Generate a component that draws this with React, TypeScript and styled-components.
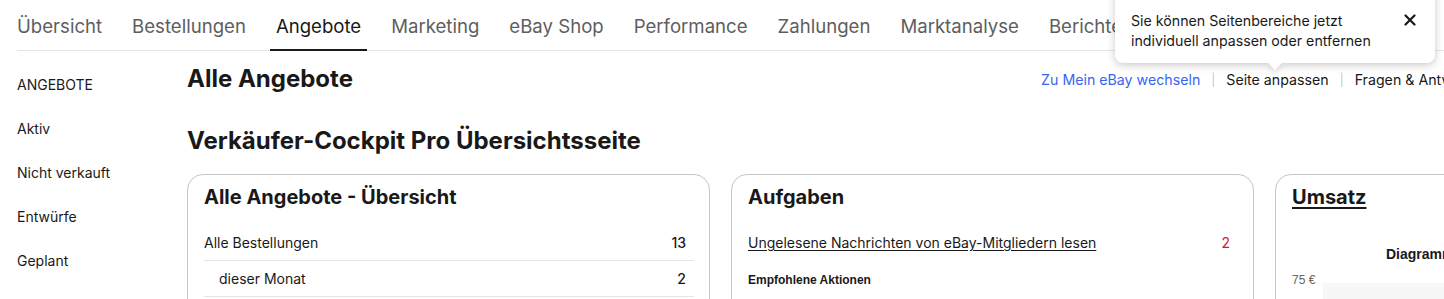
import React from 'react';
import styled, { createGlobalStyle } from 'styled-components';

const GlobalStyle = createGlobalStyle`
  html, body {
    margin: 0;
    padding: 0;
    background: #ffffff;
    overflow: hidden;
  }
  body {
    font-family: Inter, "Liberation Sans", Arial, sans-serif;
    color: #191919;
  }
`;

const tabs = ['Übersicht', 'Bestellungen', 'Angebote', 'Marketing', 'eBay Shop', 'Performance', 'Zahlungen', 'Marktanalyse', 'Berichte'];
const sideItems = ['ANGEBOTE', 'Aktiv', 'Nicht verkauft', 'Entwürfe', 'Geplant', 'Beendet'];

const App: React.FC = () => {
  return (
    <Page>
      <GlobalStyle />
      <TabBar>
        {tabs.map((t) => (
          <Tab key={t} $active={t === 'Angebote'}>{t}</Tab>
        ))}
      </TabBar>

      <Body>
        <Sidebar>
          {sideItems.map((s) => (
            <SideItem key={s}>{s}</SideItem>
          ))}
        </Sidebar>

        <Main>
          <HeaderRow>
            <PageTitle>Alle Angebote</PageTitle>
            <LinkBar>
              <BlueLink>Zu Mein eBay wechseln</BlueLink>
              <Sep>|</Sep>
              <PlainLink>Seite anpassen</PlainLink>
              <Sep>|</Sep>
              <PlainLink>Fragen &amp; Antworten</PlainLink>
            </LinkBar>
          </HeaderRow>

          <SectionTitle>Verkäufer-Cockpit Pro Übersichtsseite</SectionTitle>

          <Cards>
            <Card>
              <CardTitle>Alle Angebote - Übersicht</CardTitle>
              <Row>
                <RowLabel>Alle Bestellungen</RowLabel>
                <RowValue>13</RowValue>
              </Row>
              <Row>
                <RowLabel $indent>dieser Monat</RowLabel>
                <RowValue>2</RowValue>
              </Row>
            </Card>

            <Card>
              <CardTitle>Aufgaben</CardTitle>
              <TaskRow>
                <TaskLink>Ungelesene Nachrichten von eBay-Mitgliedern lesen</TaskLink>
                <TaskCount>2</TaskCount>
              </TaskRow>
              <SubHeading>Empfohlene Aktionen</SubHeading>
            </Card>

            <Card>
              <CardTitle $link>Umsatz</CardTitle>
              <ChartTitle>Diagramm über den Umsatz der letzten 31 Tage</ChartTitle>
              <Chart>
                <AxisLabel>75 €</AxisLabel>
                <Plot />
              </Chart>
            </Card>
          </Cards>
        </Main>
      </Body>

      <Tooltip>
        <TooltipText>
          Sie können Seitenbereiche jetzt
          <br />
          individuell anpassen oder entfernen
        </TooltipText>
        <CloseButton aria-label="Schließen">
          <svg width="12" height="12" viewBox="0 0 12 12">
            <path d="M1.5 1.5 L10.5 10.5 M10.5 1.5 L1.5 10.5" stroke="#191919" strokeWidth="2.2" strokeLinecap="round" />
          </svg>
        </CloseButton>
      </Tooltip>
    </Page>
  );
};

const Page = styled.div`
  position: relative;
  width: 1800px;
  height: 299px;
  overflow: hidden;
`;

const TabBar = styled.nav`
  display: flex;
  height: 50px;
  margin-left: 17px;
  border-bottom: 1px solid #e5e5e5;
`;

const Tab = styled.div<{ $active?: boolean }>`
  position: relative;
  display: flex;
  align-items: center;
  padding-top: 2px;
  margin-right: 30px;
  font-size: 18.6px;
  color: ${(p) => (p.$active ? '#191919' : '#5e5e5e')};
  white-space: nowrap;

  &::after {
    content: '';
    display: ${(p) => (p.$active ? 'block' : 'none')};
    position: absolute;
    left: -6px;
    right: -6px;
    bottom: -1px;
    height: 2px;
    background: #191919;
  }
`;

const Body = styled.div`
  display: flex;
`;

const Sidebar = styled.aside`
  width: 170px;
  padding: 11px 0 0 17px;
  flex-shrink: 0;
`;

const SideItem = styled.div`
  height: 44px;
  display: flex;
  align-items: center;
  font-size: 14px;
  color: #191919;
`;

const Main = styled.main`
  width: 1611px;
  padding-top: 8px;
`;

const HeaderRow = styled.div`
  display: flex;
  align-items: center;
  height: 40px;
`;

const PageTitle = styled.h1`
  margin: 0;
  font-size: 24px;
  font-weight: 700;
  line-height: 32px;
`;

const LinkBar = styled.div`
  display: flex;
  align-items: center;
  margin-left: auto;
  margin-right: 310px;
  font-size: 14.2px;
  white-space: nowrap;
`;

const BlueLink = styled.span`
  color: #3665f3;
`;

const PlainLink = styled.span`
  color: #191919;
`;

const Sep = styled.span`
  margin: 0 11px;
  color: #c7c7c7;
  font-size: 12px;
`;

const SectionTitle = styled.h2`
  margin: 26px 0 0;
  font-size: 24px;
  font-weight: 700;
  line-height: 32px;
`;

const Cards = styled.div`
  display: grid;
  grid-template-columns: repeat(3, 523px);
  gap: 21px;
  margin-top: 17px;
`;

const Card = styled.section`
  height: 200px;
  padding: 10px 15px 0 16px;
  border: 1px solid #c7c7c7;
  border-radius: 16px;
`;

const CardTitle = styled.h3<{ $link?: boolean }>`
  margin: 0 0 16px;
  font-size: 20px;
  font-weight: 700;
  line-height: 24px;
  text-decoration: ${(p) => (p.$link ? 'underline' : 'none')};
  text-decoration-thickness: 2px;
  text-underline-offset: 3px;
`;

const Row = styled.div`
  display: flex;
  align-items: center;
  justify-content: space-between;
  height: 35px;
  padding-right: 8px;
  border-bottom: 1px solid #e5e5e5;
  font-size: 14px;
`;

const RowLabel = styled.span<{ $indent?: boolean }>`
  padding-left: ${(p) => (p.$indent ? '15px' : '0')};
`;

const RowValue = styled.span`
  font-weight: 500;
`;

const TaskRow = styled.div`
  display: flex;
  align-items: center;
  justify-content: space-between;
  height: 35px;
  padding-right: 8px;
  font-size: 14px;
`;

const TaskLink = styled.span`
  text-decoration: underline;
  text-underline-offset: 2px;
`;

const TaskCount = styled.span`
  color: #e0103a;
`;

const SubHeading = styled.div`
  margin-top: 13px;
  font-family: "Liberation Sans", Arial, sans-serif;
  font-size: 12px;
  font-weight: 700;
`;

const ChartTitle = styled.div`
  margin-top: 37px;
  padding-left: 94px;
  font-family: "Liberation Sans", Arial, sans-serif;
  font-size: 14px;
  font-weight: 700;
  white-space: nowrap;
`;

const Chart = styled.div`
  display: flex;
  margin-top: 11px;
`;

const AxisLabel = styled.span`
  width: 31px;
  font-family: "Liberation Sans", Arial, sans-serif;
  font-size: 12px;
  color: #666666;
`;

const Plot = styled.div`
  flex: 1;
  height: 120px;
  margin-top: 10px;
  background: #f7f7f7;
`;

const Tooltip = styled.div`
  position: absolute;
  top: -10px;
  left: 1115px;
  width: 320px;
  height: 73px;
  box-sizing: border-box;
  display: flex;
  justify-content: space-between;
  padding: 21px 16px 0 16px;
  background: #ffffff;
  border-radius: 8px;
  box-shadow: 0 2px 9px rgba(0, 0, 0, 0.22);

  &::after {
    content: '';
    position: absolute;
    left: 155px;
    bottom: -5px;
    width: 10px;
    height: 10px;
    background: #ffffff;
    transform: rotate(45deg);
    box-shadow: 3px 3px 5px rgba(0, 0, 0, 0.08);
  }
`;

const TooltipText = styled.div`
  font-size: 14.2px;
  line-height: 20px;
  color: #191919;
`;

const CloseButton = styled.button`
  align-self: flex-start;
  margin: 3px 3px 0 0;
  padding: 0;
  border: none;
  background: transparent;
  line-height: 0;
  cursor: pointer;
`;

export default App;
